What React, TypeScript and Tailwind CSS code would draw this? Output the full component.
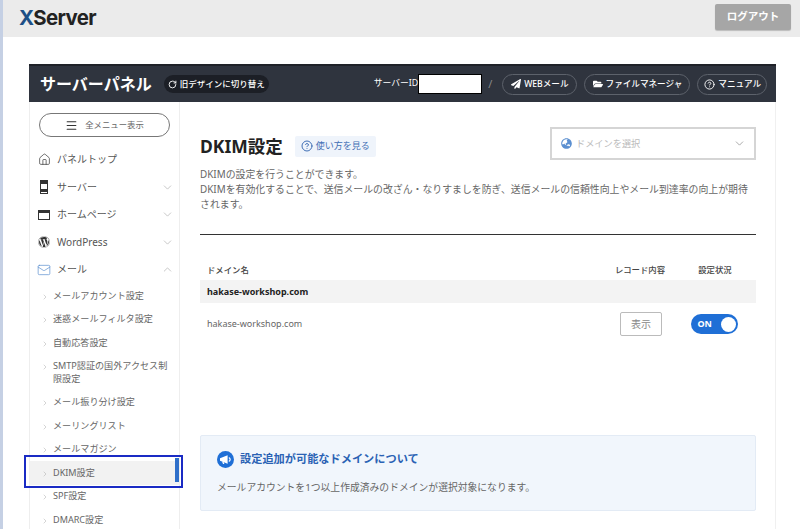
import React from "react";
import { ChevronDown, ChevronUp, ChevronRight, Home, Mail, Menu, CircleHelp, RotateCw } from "lucide-react";
import { FaPaperPlane, FaFolderOpen, FaWordpress, FaGlobeAsia } from "react-icons/fa";

const font = { fontFamily: '"Noto Sans", "Noto Sans CJK JP", sans-serif' };

function NavRow({ icon, label, open }: { icon: React.ReactNode; label: string; open?: boolean }) {
  return (
    <div className="flex h-[27.5px] items-center pl-[7px] pr-[5px]">
      <div className="flex w-[14px] justify-center">{icon}</div>
      <span className="ml-[6px] flex-1 text-[10px] text-[#555]">{label}</span>
      {open === undefined ? null : open ? (
        <ChevronUp size={13} strokeWidth={1.2} className="text-[#aaa]" />
      ) : (
        <ChevronDown size={13} strokeWidth={1.2} className="text-[#aaa]" />
      )}
    </div>
  );
}

function SubRow({ label, active }: { label: string; active?: boolean }) {
  return (
    <div className={`relative flex py-[5.5px] pl-[11px] pr-[6px] ${active ? "bg-[#f2f2f2]" : ""}`}>
      <ChevronRight size={8} strokeWidth={1.5} className="mt-[3px] shrink-0 text-[#aaa]" />
      <span className="ml-[4px] text-[9.1px] leading-[12.5px] text-[#666]">{label}</span>
      {active && (
        <>
          <div className="absolute -top-[3px] right-[0px] h-[24px] w-[4px] bg-[#2f6fc9]" />
          <div className="absolute -bottom-[3px] -left-[6px] -right-[4px] -top-[6px] border-2 border-[#1a2bc4]" />
        </>
      )}
    </div>
  );
}

function Pill({ icon, label, pad }: { icon: React.ReactNode; label: string; pad: string }) {
  return (
    <div className={`flex h-[21px] items-center gap-[3px] rounded-full border border-[#5d626b] text-[8.6px] font-medium text-white ${pad}`}>
      {icon}
      <span>{label}</span>
    </div>
  );
}

export default function App() {
  return (
    <div className="flex h-[529px] w-[800px] overflow-hidden bg-white" style={font}>
      <div className="w-[3px] shrink-0 bg-[#c5d0e4]" />
      <div className="flex min-w-0 flex-1 flex-col">
        <header className="flex h-[37px] shrink-0 items-center justify-between bg-[#ebebeb] pl-[16px] pr-[9px]">
          <div className="text-[20.4px] font-bold tracking-[-0.6px] text-[#222]" style={{ fontFamily: '"Inter", sans-serif' }}>
            <span className="text-[#1d4f86]">X</span>Server
          </div>
          <div className="mb-[3px] flex h-[26px] w-[76px] items-center justify-center rounded-[2px] bg-[#a6a6a6] text-[10.5px] font-bold text-white shadow-[0_1px_1px_rgba(0,0,0,0.2)]">
            ログアウト
          </div>
        </header>

        <div className="ml-[26px] mr-[24px] mt-[27px] flex min-h-0 flex-1 flex-col">
          <div className="flex h-[38px] shrink-0 items-center border-t-2 border-[#1f2228] bg-[#2f343e] pl-[11px] pr-[9px]">
            <div className="text-[16px] font-bold text-white">サーバーパネル</div>
            <div className="ml-[12px] flex h-[18px] items-center gap-[3px] rounded-full bg-[#1c1f26] px-[4px] text-[8.5px] font-medium text-white">
              <RotateCw size={9} strokeWidth={2.4} />
              <span>旧デザインに切り替え</span>
            </div>
            <div className="ml-auto text-[8.8px] text-white">サーバーID</div>
            <div className="h-[20px] w-[64px] border border-black bg-white" />
            <div className="ml-[6px] mr-[10px] text-[11px] text-[#888]">/</div>
            <div className="flex gap-[7px]">
              <Pill pad="pl-[8px] pr-[7px]" icon={<FaPaperPlane size={10} />} label="WEBメール" />
              <Pill pad="pl-[8px] pr-[7px]" icon={<FaFolderOpen size={10} />} label="ファイルマネージャ" />
              <Pill pad="pl-[6px] pr-[5px]" icon={<CircleHelp size={11} />} label="マニュアル" />
            </div>
          </div>

          <div className="flex min-h-0 flex-1 border-r border-[#f0f0f0]">
            <aside className="w-[151px] shrink-0 border-x border-[#eeeeee] pt-[11px]">
              <div className="mx-[9px] flex h-[24px] items-center justify-center gap-[7px] rounded-full border border-[#777] text-[8.4px] text-[#666]">
                <Menu size={13} className="text-[#333]" />
                <span>全メニュー表示</span>
              </div>
              <div className="mt-[9px]">
                <NavRow icon={<Home size={13} strokeWidth={1.4} className="text-[#444]" />} label="パネルトップ" />
                <NavRow
                  open={false}
                  icon={
                    <div className="flex h-[14px] w-[8px] flex-col gap-[1px] border border-[#333]">
                      <div className="h-[3px] bg-[#333]" />
                      <div className="h-[3px] bg-white" />
                      <div className="h-[3px] bg-[#333]" />
                    </div>
                  }
                  label="サーバー"
                />
                <NavRow
                  open={false}
                  icon={<div className="h-[10px] w-[12px] border border-t-[3px] border-[#333]" />}
                  label="ホームページ"
                />
                <NavRow open={false} icon={<FaWordpress size={12} className="text-[#333]" />} label="WordPress" />
                <NavRow open icon={<Mail size={14} strokeWidth={1.2} className="text-[#5b8fd0]" />} label="メール" />
              </div>
              <div className="mt-[0.5px]">
                <SubRow label="メールアカウント設定" />
                <SubRow label="迷惑メールフィルタ設定" />
                <SubRow label="自動応答設定" />
                <SubRow label="SMTP認証の国外アクセス制限設定" />
                <SubRow label="メール振り分け設定" />
                <SubRow label="メーリングリスト" />
                <SubRow label="メールマガジン" />
                <SubRow label="DKIM設定" active />
                <SubRow label="SPF設定" />
                <SubRow label="DMARC設定" />
              </div>
            </aside>

            <main className="min-w-0 flex-1 pl-[20px] pr-[19px]">
              <div className="flex items-start justify-between pt-[25px]">
                <div className="flex items-center pt-[7px]">
                  <h1 className="text-[17.5px] font-bold leading-[24px] text-[#222]">DKIM設定</h1>
                  <div className="ml-[12px] flex h-[21px] items-center gap-[3px] rounded-[2px] bg-[#eff4fb] px-[6px] text-[9px] text-[#3f6fb5]">
                    <CircleHelp size={12} />
                    <span>使い方を見る</span>
                  </div>
                </div>
                <div className="flex h-[33px] w-[206px] items-center border-2 border-[#d5d5d5] pl-[9px] pr-[8px]">
                  <FaGlobeAsia size={11} className="text-[#5b8fd0]" />
                  <span className="ml-[4px] flex-1 text-[9.2px] text-[#bbb]">ドメインを選択</span>
                  <ChevronDown size={13} strokeWidth={1.3} className="text-[#888]" />
                </div>
              </div>

              <div className="mt-[7px] text-[9.9px] leading-[15px] text-[#666]">
                <p>DKIMの設定を行うことができます。</p>
                <p>DKIMを有効化することで、送信メールの改ざん・なりすましを防ぎ、送信メールの信頼性向上やメール到達率の向上が期待されます。</p>
              </div>

              <div className="mt-[22px] border-t border-[#333]" />

              <div className="mt-[26px] flex h-[19px] items-center text-[8.4px] font-medium text-[#444]">
                <div className="flex-1 pl-[7px]">ドメイン名</div>
                <div className="w-[68px] text-center">レコード内容</div>
                <div className="w-[82px] text-center">設定状況</div>
              </div>
              <div className="flex h-[23px] items-center bg-[#f3f3f3] pl-[7px] text-[9px] font-bold text-[#222]">
                hakase-workshop.com
              </div>
              <div className="flex h-[42px] items-center text-[9px] text-[#666]">
                <div className="flex-1 pl-[7px]">hakase-workshop.com</div>
                <div className="flex w-[68px] justify-center">
                  <div className="ml-[2px] flex h-[24px] w-[42px] items-center justify-center rounded-[2px] border border-[#bbb] text-[10px] text-[#888]">
                    表示
                  </div>
                </div>
                <div className="flex w-[82px] justify-center">
                  <div className="mr-[2px] flex h-[20px] w-[47px] items-center justify-between rounded-full bg-[#1f6fd6] pl-[7px] pr-[2px] text-[9px] font-bold text-white">
                    <span>ON</span>
                    <div className="h-[15px] w-[15px] rounded-full bg-white" />
                  </div>
                </div>
              </div>

              <div className="mt-[90px] h-[76px] rounded-[2px] border border-[#e3ebf5] bg-[#f1f6fc] pl-[16px] pt-[15px]">
                <div className="flex items-center gap-[6px]">
                  <svg width="17" height="17" viewBox="0 0 17 17" className="shrink-0">
                    <circle cx="8.5" cy="8.5" r="8.5" fill="#1f6fd6" />
                    <path d="M3 7.2 L10.6 4.2 V12.8 L3 9.8 Z" fill="white" />
                    <path d="M11.8 6.6 A2 2 0 0 1 11.8 10.4" fill="none" stroke="white" strokeWidth="1.2" />
                    <path d="M5 10.4 L6 13 H7.4 L6.6 10.9 Z" fill="white" />
                  </svg>
                  <span className="text-[11.2px] font-bold text-[#2a62b4]">設定追加が可能なドメインについて</span>
                </div>
                <p className="mt-[13px] text-[9.8px] text-[#666]">メールアカウントを1つ以上作成済みのドメインが選択対象になります。</p>
              </div>
            </main>
          </div>
        </div>
      </div>
    </div>
  );
}
